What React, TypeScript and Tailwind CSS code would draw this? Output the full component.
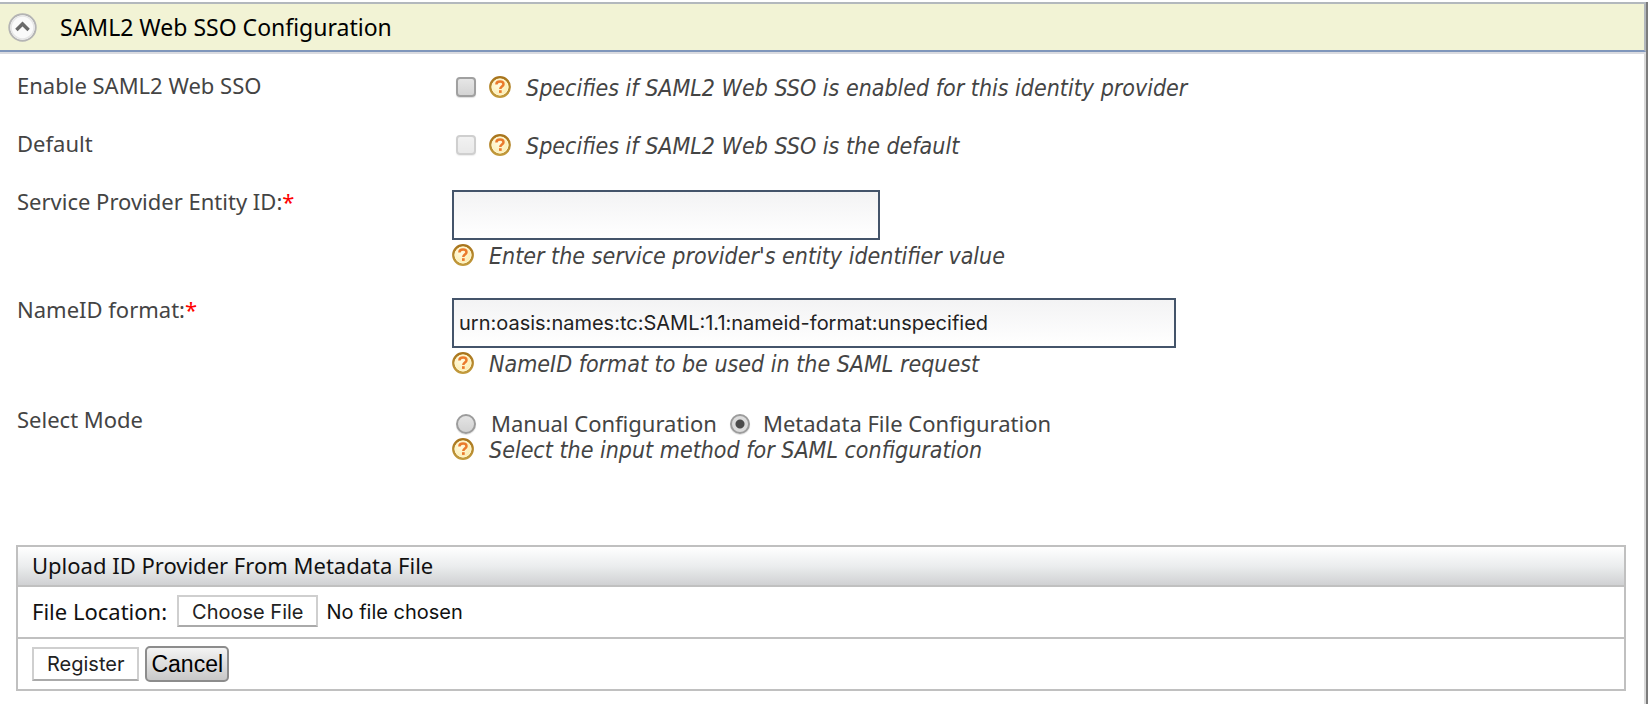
import { useState, type ReactNode } from "react";

function HelpIcon() {
  return (
    <svg viewBox="0 0 22 22" className="size-[22px] shrink-0" aria-hidden="true">
      <defs>
        <linearGradient id="ring" x1="0" y1="0" x2="0" y2="1">
          <stop offset="0" stopColor="#a8741c" />
          <stop offset="1" stopColor="#c29a3c" />
        </linearGradient>
        <radialGradient id="face" cx="0.4" cy="0.4" r="0.7">
          <stop offset="0" stopColor="#fffbe0" />
          <stop offset="1" stopColor="#fbe9a4" />
        </radialGradient>
      </defs>
      <circle cx="11" cy="11" r="9.7" fill="url(#face)" stroke="url(#ring)" strokeWidth="2.4" />
      <circle cx="11" cy="11" r="8" fill="none" stroke="#fff6cf" strokeWidth="1" />
      <path
        d="M7.4 8.4C7.4 6.2 9 5.6 11 5.6c2.2 0 3.5 1 3.5 2.7 0 2.2-3.2 2.3-3.2 4.7"
        fill="none"
        stroke="#ea7a2c"
        strokeWidth="2.5"
      />
      <rect x="10" y="14.2" width="2.7" height="2.7" fill="#ea7a2c" />
    </svg>
  );
}

function Help({ children }: { children: ReactNode }) {
  return (
    <div className="flex h-[25px] items-center gap-[15px] leading-[25px]">
      <HelpIcon />
      <em className="pt-[3px] font-['DejaVu_Sans_Condensed','DejaVu_Sans',sans-serif] text-[23px] font-stretch-condensed">
        {children}
      </em>
    </div>
  );
}

const row = "grid grid-cols-[435px_1fr] items-start";
const label = "leading-[28px]";
const textBox =
  "mb-[2px] block h-[50px] max-w-full rounded-none border-2 border-[#44546a] bg-linear-to-b from-[#f3f3f4] to-white px-[5px] font-['Inter',sans-serif] text-[20px] text-[#222] outline-none";
const checkBox =
  "size-5 shrink-0 appearance-none rounded-[4px] border-2 border-[#a0a0a0] bg-linear-to-b from-[#e6e6e6] to-[#d4d4d4] shadow-[0_1px_1px_#0002] checked:bg-none checked:bg-[#555] disabled:opacity-50";
const radio =
  "size-5 shrink-0 appearance-none rounded-full border-2 border-[#9c9c9c] bg-linear-to-b from-[#e4e4e4] to-[#d2d2d2] shadow-[0_1px_1px_#0002] checked:bg-[radial-gradient(circle,#4c4c4c_4px,#dcdcdc_5px)]";
const plainButton =
  "border-2 border-[#cfcfcf] border-b-[#aaa] bg-white font-['Inter',sans-serif] text-[20px] text-[#222]";

export default function App() {
  const [open, setOpen] = useState(true);
  const [mode, setMode] = useState("metadata");

  return (
    <div className="flex min-h-screen bg-white pt-[2px] font-['Noto_Sans',sans-serif] text-[22px] text-[#444]">
      <main className="min-w-0 flex-1 border-r-2 border-[#d9d9d9]">
        <h2 className="-mr-[2px] flex h-[50px] items-center border-t-2 border-r-2 border-b-2 border-t-[#b3b8bd] border-r-[#b3b8bd] border-b-[#7f96bb] bg-[#f2f3d5] pl-2 text-[23px] text-black shadow-[0_2px_0_#dadbe0]">
          <button
            type="button"
            aria-expanded={open}
            aria-label="Toggle SAML2 Web SSO Configuration"
            onClick={() => setOpen(!open)}
            className="mr-[23px] size-[29px]"
          >
            <svg viewBox="0 0 29 29" className={open ? "size-full" : "size-full rotate-180"}>
              <circle cx="14.5" cy="14.5" r="13.2" fill="#fff" stroke="#b4b4b4" strokeWidth="2" />
              <circle cx="14.5" cy="14.5" r="11.4" fill="#fafafa" stroke="#e6e6e6" strokeWidth="1.4" />
              <path d="M8.4 17l6.1-6 6.1 6" fill="none" stroke="#6a6a6a" strokeWidth="3.4" />
            </svg>
          </button>
          SAML2 Web SSO Configuration
        </h2>

        {open && (
          <form className="pt-[19px]" onSubmit={(e) => e.preventDefault()}>
            <div className="flex flex-col gap-7 px-[17px]">
              <div className={row}>
                <label htmlFor="enable" className={label}>Enable SAML2 Web SSO</label>
                <div className="-mb-[2px] flex h-8 items-center gap-[13px] pl-1">
                  <input id="enable" type="checkbox" className={checkBox} />
                  <Help>Specifies if SAML2 Web SSO is enabled for this identity provider</Help>
                </div>
              </div>

              <div className={row}>
                <label htmlFor="default" className={label}>Default</label>
                <div className="-mb-[2px] flex h-8 items-center gap-[13px] pl-1">
                  <input id="default" type="checkbox" disabled className={checkBox} />
                  <Help>Specifies if SAML2 Web SSO is the default</Help>
                </div>
              </div>

              <div className={row}>
                <label htmlFor="entity" className={label}>
                  Service Provider Entity ID:<span className="text-[#f00]">*</span>
                </label>
                <div className="pt-[3px]">
                  <input id="entity" type="text" className={`${textBox} w-[428px]`} />
                  <Help>Enter the service provider's entity identifier value</Help>
                </div>
              </div>

              <div className={row}>
                <label htmlFor="nameid" className={label}>
                  NameID format:<span className="text-[#f00]">*</span>
                </label>
                <div className="pt-[3px] pb-[2px]">
                  <input
                    id="nameid"
                    type="text"
                    defaultValue="urn:oasis:names:tc:SAML:1.1:nameid-format:unspecified"
                    className={`${textBox} w-[724px]`}
                  />
                  <Help>NameID format to be used in the SAML request</Help>
                </div>
              </div>

              <div className={row} role="radiogroup" aria-labelledby="mode-label">
                <span id="mode-label" className={label}>Select Mode</span>
                <div className="pt-[6px]">
                  <div className="flex items-center gap-[13px] pl-1 leading-[25px]">
                    <label className="flex items-center gap-[15px]">
                      <input type="radio" name="mode" checked={mode === "manual"} onChange={() => setMode("manual")} className={radio} />
                      Manual Configuration
                    </label>
                    <label className="flex items-center gap-[13px]">
                      <input type="radio" name="mode" checked={mode === "metadata"} onChange={() => setMode("metadata")} className={radio} />
                      Metadata File Configuration
                    </label>
                  </div>
                  <Help>Select the input method for SAML configuration</Help>
                </div>
              </div>
            </div>

            <section className="mt-[84px] mr-[18px] ml-4 border-2 border-[#c0c0c0] text-[#111]">
              <h3 className="h-10 border-b-2 border-[#c0c0c0] bg-linear-to-b from-white via-[#ebedee] to-[#d0d1d3] pl-[14px] leading-[36px]">
                Upload ID Provider From Metadata File
              </h3>
              <div className="flex h-[52px] items-center gap-[10px] border-b-2 border-[#c0c0c0] pb-[2px] pl-[14px]">
                <label htmlFor="file">File Location:</label>
                <input
                  id="file"
                  type="file"
                  className="font-['Inter',sans-serif] text-[20px] file:mr-2 file:h-8 file:border-2 file:border-solid file:border-[#cfcfcf] file:border-b-[#aaa] file:bg-white file:px-[13px] file:text-[#222]"
                />
              </div>
              <div className="flex h-[50px] items-center gap-[6px] pl-[14px]">
                <button type="submit" className={`${plainButton} h-[34px] px-[13px]`}>Register</button>
                <button
                  type="button"
                  className="h-9 rounded-[5px] border-2 border-[#8c8c8c] bg-linear-to-b from-[#f4f4f4] to-[#c8c8c8] px-1 font-['Liberation_Sans',sans-serif] text-[23px] leading-none text-black"
                >
                  Cancel
                </button>
              </div>
            </section>
          </form>
        )}
      </main>
      <div className="w-[2px] bg-[#7c7c7c]" />
    </div>
  );
}
